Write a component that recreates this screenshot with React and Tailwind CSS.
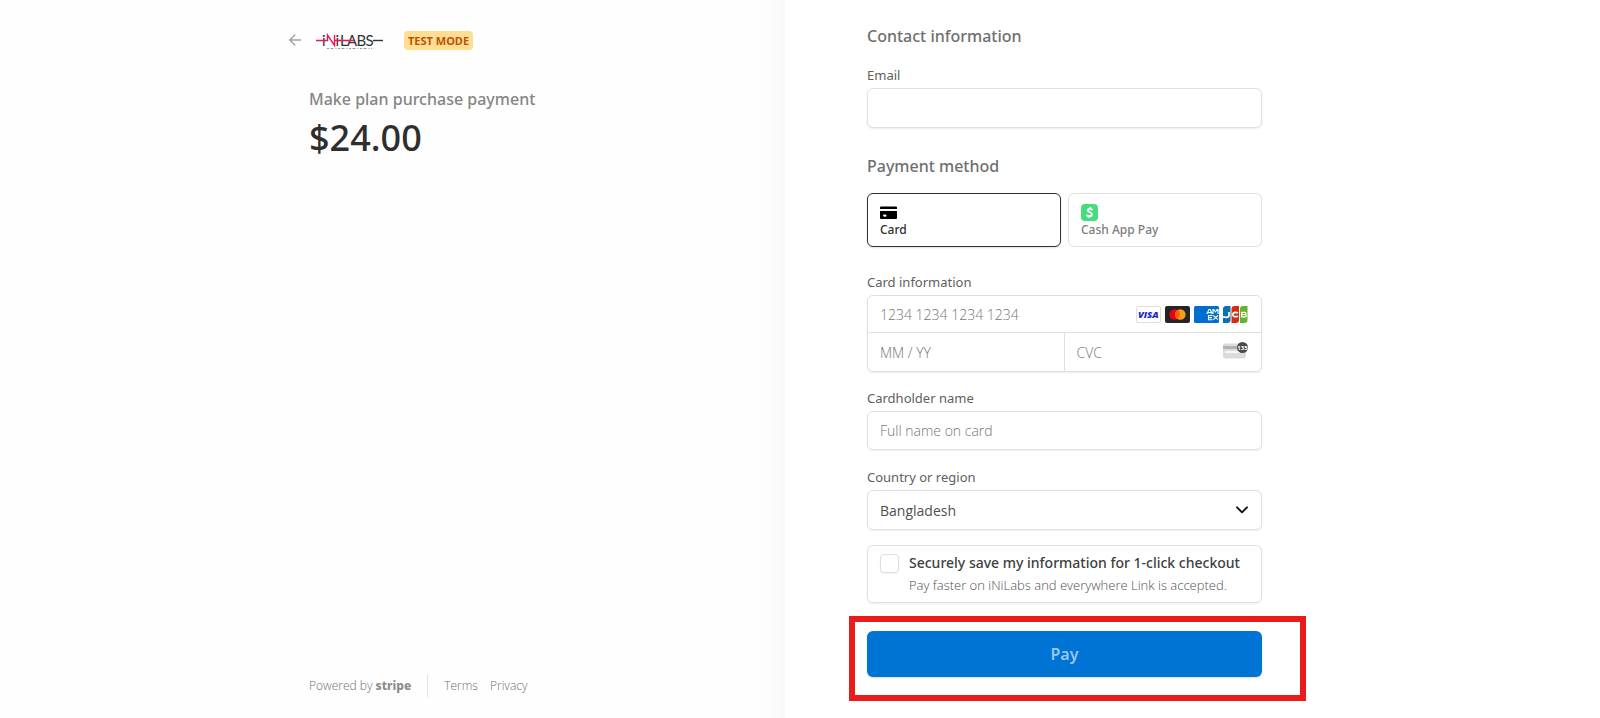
import React from "react";

const fieldText = "text-sm font-light text-[#303030] outline-none placeholder:text-[#757575]";
const fieldBox = `w-full rounded-md border border-[#e0e0e0] bg-white px-3 shadow-[0_1px_2px_rgba(0,0,0,0.08)] ${fieldText}`;
const labelText = "block font-['Noto_Sans','Open_Sans',sans-serif] text-[13px] leading-5 text-[#606060]";
const headingText = "font-['Noto_Sans','Open_Sans',sans-serif] text-base leading-6 font-medium text-[#6f6f6f]";

function Logo() {
  return (
    <svg viewBox="0 0 68 20" className="h-5 w-17" role="img" aria-label="iNiLABS">
      <g fontFamily="Lato, sans-serif" fontSize="15" fill="#333">
        <text x="6" y="15.500">i</text>
        <text x="19.500" y="15.500">i</text>
        <text x="24" y="15.500">L</text>
        <text x="31" y="15.500">A</text>
        <text x="40.500" y="15.500">B</text>
        <text x="49.500" y="15.500">S</text>
      </g>
      <path d="M0 10.500H11.500V5L18.500 15.500V5" fill="none" stroke="#e5185d" strokeWidth="1.400" />
      <path d="M18.500 10.500H38" stroke="#e5185d" strokeWidth="1.600" />
      <path d="M57 10.500H67" stroke="#333" strokeWidth="1.400" />
      <path d="M11 18.500H56" stroke="#999" strokeWidth="1" strokeDasharray="2 1.500 3 2 1 1.500" />
    </svg>
  );
}

function ArrowLeft() {
  return (
    <svg viewBox="0 0 12 12" className="size-3" aria-hidden="true">
      <path d="M11.500 6H1M5.800 1L.8 6l5 5" fill="none" stroke="#a0a0a0" strokeWidth="1.400" strokeLinecap="round" strokeLinejoin="round" />
    </svg>
  );
}

function CardIcon() {
  return (
    <svg viewBox="0 0 17 17" className="size-[17px]" aria-hidden="true">
      <path d="M0 3.500a1 1 0 0 1 1-1h15a1 1 0 0 1 1 1V5H0z" />
      <path fillRule="evenodd" d="M0 7h17v7a1 1 0 0 1-1 1H1a1 1 0 0 1-1-1zM4.300 10.500a1.200 1 0 0 0 0 2.200h1a1.200 1 0 0 0 0-2.200z" />
    </svg>
  );
}

function CashIcon() {
  return (
    <svg viewBox="0 0 17 17" className="size-[17px]" aria-hidden="true">
      <rect width="17" height="17" rx="4" fill="#46dd7c" />
      <path d="M11.500 6.100C10.800 5.300 9.800 4.900 8.800 4.900c-1.200 0-2 .6-2 1.500 0 2.300 4.100 1.300 4.100 3.900 0 1.100-1 1.900-2.500 1.900-1.200 0-2.300-.4-3-1.200M9.500 3.200l-.3 1.500M7.900 12.300l-.3 1.500" fill="none" stroke="#fff" strokeWidth="1.900" />
    </svg>
  );
}

function Visa() {
  return (
    <svg viewBox="0 0 25 17" className="h-[17px] w-[25px]" role="img" aria-label="Visa">
      <rect x=".5" y=".5" width="24" height="16" rx="1.500" fill="#fff" stroke="#dedede" />
      <text x="12.300" y="12.200" textAnchor="middle" fontFamily="Open Sans, sans-serif" fontSize="9.500" fontWeight="800" fontStyle="italic" fill="#1a2bc9">VISA</text>
    </svg>
  );
}

function Mastercard() {
  return (
    <svg viewBox="0 0 25 17" className="h-[17px] w-[25px]" role="img" aria-label="Mastercard">
      <rect width="25" height="17" rx="2" fill="#252525" />
      <circle cx="9.700" cy="8.500" r="5.300" fill="#eb001b" />
      <circle cx="15.300" cy="8.500" r="5.300" fill="#f79e1b" />
      <path d="M12.500 4a5.300 5.300 0 0 1 0 9 5.300 5.300 0 0 1 0-9" fill="#ff5f00" />
    </svg>
  );
}

function Amex() {
  return (
    <svg viewBox="0 0 25 17" className="h-[17px] w-[25px]" role="img" aria-label="American Express">
      <rect width="25" height="17" rx="1.500" fill="#016fd0" />
      <path
        d="M12.800 8l2.200-4.500h1.200L18.300 8M14 6.600h3M19 8V3.500h.8l1.700 2.300 1.700-2.300h.8V8M18.500 9.500h-4v4.200h4M14.500 11.600h3.500M19.300 9.500l4.700 4.200M24 9.500l-4.700 4.200"
        fill="none"
        stroke="#fff"
        strokeWidth="1.100"
      />
    </svg>
  );
}

function Jcb() {
  return (
    <svg viewBox="0 0 25 17" className="h-[17px] w-[25px]" role="img" aria-label="JCB">
      <path d="M3 0h4.500v14a3 3 0 0 1-3 3H0V3a3 3 0 0 1 3-3" fill="#0b72b0" />
      <path d="M11.500 0H16v14a3 3 0 0 1-3 3H8.500V3a3 3 0 0 1 3-3" fill="#d92b0f" />
      <path d="M20 0h4.500v14a3 3 0 0 1-3 3H17V3a3 3 0 0 1 3-3" fill="#63b32e" />
      <path d="M6 6v3.600c0 2.100-3.600 2-6 1.200M15 6.900c-2.500-.9-5.300-.5-5.300 1.700s2.800 2.500 5.300 1.600" fill="none" stroke="#fff" strokeWidth="1.700" />
      <path d="M18 6.300h3.800c1.600 0 1.600 2.200 0 2.200H18M18 8.500h4c1.800 0 1.800 2.400 0 2.400h-4M18.800 6v5" fill="none" stroke="#fff" strokeWidth="1.200" />
    </svg>
  );
}

function CvcIcon() {
  return (
    <svg viewBox="0 0 25 17" className="h-[17px] w-[25px]" aria-hidden="true">
      <rect y="1.500" width="23" height="15" rx="2" fill="#dcdcdc" />
      <path d="M0 4h23v3H0z" fill="#b2b2b2" />
      <path d="M2 9h15v2H2z" fill="#f7f7f7" />
      <circle cx="19.500" cy="5.500" r="5.500" fill="#4a4a4a" />
      <text x="19.500" y="7.700" textAnchor="middle" fontFamily="Open Sans, sans-serif" fontSize="6" fontWeight="700" fill="#fff">135</text>
    </svg>
  );
}

function Summary() {
  return (
    <section className="flex min-w-0 justify-end bg-gradient-to-l from-[#f9f9f9] via-[#fdfdfd] via-[16px] to-[#fefefe] to-[32px] pr-20">
      <div className="flex w-full max-w-[416px] flex-col justify-between pt-[30px] pb-5">
        <div>
          <header className="flex h-5 items-center">
            <a href="#back" aria-label="Back" className="mr-[15px]">
              <ArrowLeft />
            </a>
            <Logo />
            <span className="ml-5 rounded bg-[#ffdd92] px-1 font-['Noto_Sans','Open_Sans',sans-serif] text-[11px] leading-[19px] font-bold text-[#bb5504]">TEST MODE</span>
          </header>
          <div className="mt-[37px] pl-5 font-['Noto_Sans','Open_Sans',sans-serif]">
            <h1 className="text-base leading-6 font-medium text-[#858585]">Make plan purchase payment</h1>
            <p className="mt-[5px] text-4xl leading-11 font-medium text-[#2e2e2e]">$24.00</p>
          </div>
        </div>
        <footer className="flex h-6 items-center pl-5 text-xs font-light text-[#707070]">
          <span>Powered by <b className="font-['Noto_Sans','Open_Sans',sans-serif] font-extrabold text-[#8c8c8c]">stripe</b></span>
          <span className="mx-4 h-[22px] w-px bg-[#e2e2e2]" />
          <a href="#terms" className="mr-3">Terms</a>
          <a href="#privacy">Privacy</a>
        </footer>
      </div>
    </section>
  );
}

function PaymentForm() {
  return (
    <form className="min-w-0 bg-white pt-6 pb-10 pl-[82px]" onSubmit={(e) => e.preventDefault()}>
      <div className="w-full max-w-[395px]">
        <h2 className={headingText}>Contact information</h2>
        <label htmlFor="email" className={`mt-[17px] mb-[3px] ${labelText}`}>Email</label>
        <input id="email" type="email" className={`h-10 ${fieldBox}`} />

        <h2 className={`mt-[26px] mb-[15px] ${headingText}`}>Payment method</h2>
        <div className="grid grid-cols-2 gap-[7px] font-['Noto_Sans','Open_Sans',sans-serif]">
          <button type="button" aria-pressed="true" className="flex h-[54px] flex-col items-start rounded-md border border-[#303030] bg-white px-3 pt-[10px] text-xs leading-[18px] font-medium text-[#303030] shadow-[0_1px_2px_rgba(0,0,0,0.12)]">
            <CardIcon />
            Card
          </button>
          <button type="button" aria-pressed="false" className="flex h-[54px] flex-col items-start rounded-md border border-[#e0e0e0] bg-white px-3 pt-[10px] text-xs leading-[18px] font-medium text-[#7c7c7c]">
            <CashIcon />
            Cash App Pay
          </button>
        </div>

        <label htmlFor="number" className={`mt-[25px] mb-[3px] ${labelText}`}>Card information</label>
        <div className="rounded-md border border-[#e0e0e0] bg-white shadow-[0_1px_2px_rgba(0,0,0,0.08)]">
          <div className="flex h-[37px] items-center border-b border-[#e0e0e0] pr-[13px] pl-3">
            <input id="number" placeholder="1234 1234 1234 1234" className={`min-w-0 flex-1 pt-px ${fieldText}`} />
            <div className="flex gap-1">
              <Visa />
              <Mastercard />
              <Amex />
              <Jcb />
            </div>
          </div>
          <div className="grid h-[38px] grid-cols-2">
            <input aria-label="Expiration" placeholder="MM / YY" className={`min-w-0 border-r border-[#e0e0e0] px-3 pt-px ${fieldText}`} />
            <div className="flex items-center pr-[13px] pl-3">
              <input aria-label="CVC" placeholder="CVC" className={`min-w-0 flex-1 pt-px ${fieldText}`} />
              <div className="pb-1">
                <CvcIcon />
              </div>
            </div>
          </div>
        </div>

        <label htmlFor="holder" className={`mt-4 mb-[3px] ${labelText}`}>Cardholder name</label>
        <input id="holder" placeholder="Full name on card" className={`h-[39px] ${fieldBox}`} />

        <label htmlFor="country" className={`mt-[17px] mb-[3px] ${labelText}`}>Country or region</label>
        <div className="grid items-center">
          <select id="country" className="col-start-1 row-start-1 h-10 w-full appearance-none rounded-md border border-[#e0e0e0] bg-white px-3 pt-px text-sm text-[#505050] shadow-[0_1px_2px_rgba(0,0,0,0.08)] outline-none">
            <option>Bangladesh</option>
          </select>
          <svg viewBox="0 0 12 8" className="pointer-events-none col-start-1 row-start-1 mr-[14px] h-2 w-3 justify-self-end" aria-hidden="true">
            <path d="M1 1.300l5 5 5-5" fill="none" stroke="#111" strokeWidth="1.900" strokeLinecap="round" strokeLinejoin="round" />
          </svg>
        </div>

        <div className="mt-[15px] flex h-[58px] gap-[10px] rounded-md border border-[#e0e0e0] px-3 pt-2 shadow-[0_1px_2px_rgba(0,0,0,0.08)]">
          <input id="save" type="checkbox" className="size-[19px] shrink-0 appearance-none rounded border border-[#dedede] bg-white shadow-[0_1px_2px_rgba(0,0,0,0.06)]" />
          <div className="whitespace-nowrap">
            <label htmlFor="save" className="block font-['Noto_Sans','Open_Sans',sans-serif] text-sm leading-[18px] font-medium text-[#404040]">Securely save my information for 1-click checkout</label>
            <p className="mt-[3px] text-[13px] leading-5 font-light text-[#505050]">Pay faster on iNiLabs and everywhere Link is accepted.</p>
          </div>
        </div>

        <div className="relative mt-7">
          <button type="submit" className="h-[46px] w-full rounded-md bg-[#0074d4] font-['Noto_Sans','Open_Sans',sans-serif] text-base font-semibold text-[#99c7ee] shadow-[0_1px_2px_rgba(0,0,0,0.15)]">Pay</button>
          <div className="pointer-events-none absolute -top-[15px] -right-11 -bottom-6 -left-[18px] border-[6px] border-[#ea1b1b]" />
        </div>
      </div>
    </form>
  );
}

export default function App() {
  return (
    <main className="grid min-h-screen grid-cols-[785fr_815fr] bg-white font-['Open_Sans','Noto_Sans',sans-serif]">
      <Summary />
      <PaymentForm />
    </main>
  );
}
